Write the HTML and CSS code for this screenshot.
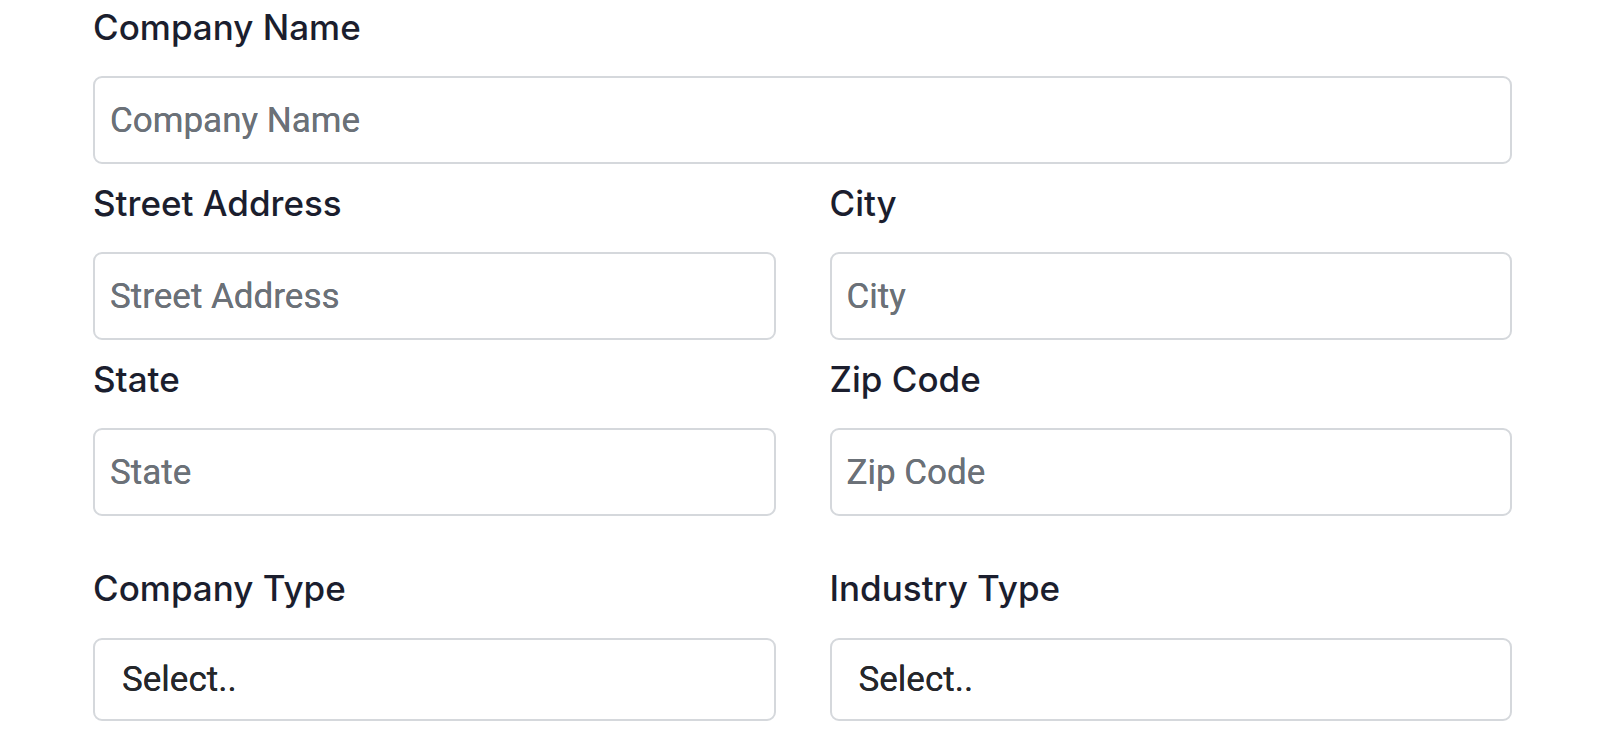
FILE: index.html
```html
<!DOCTYPE html>
<html lang="en">
<head>
<meta charset="utf-8">
<title>Company Form</title>
<link rel="stylesheet" href="styles.css">
</head>
<body>
<form class="form">
  <div class="field">
    <label class="label">Company Name</label>
    <input class="input" type="text" placeholder="Company Name">
  </div>
  <div class="row">
    <div class="field">
      <label class="label">Street Address</label>
      <input class="input" type="text" placeholder="Street Address">
    </div>
    <div class="field">
      <label class="label">City</label>
      <input class="input" type="text" placeholder="City">
    </div>
  </div>
  <div class="row">
    <div class="field">
      <label class="label">State</label>
      <input class="input" type="text" placeholder="State">
    </div>
    <div class="field">
      <label class="label">Zip Code</label>
      <input class="input" type="text" placeholder="Zip Code">
    </div>
  </div>
  <div class="row row-select">
    <div class="field">
      <label class="label label-select">Company Type</label>
      <div class="select">Select..</div>
    </div>
    <div class="field">
      <label class="label label-select">Industry Type</label>
      <div class="select">Select..</div>
    </div>
  </div>
</form>
</body>
</html>
```

FILE: styles.css
```css
* { box-sizing: border-box; }
html, body { margin: 0; padding: 0; background: #ffffff; }
body { font-family: Roboto, "Noto Sans", sans-serif; }

.form {
  width: 1419px;
  margin-left: 93px;
  padding-top: 0;
  display: flex;
  flex-direction: column;
}

.row {
  display: grid;
  grid-template-columns: 1fr 1fr;
  column-gap: 54px;
}

.row-select { margin-top: 33px; }

.field {
  display: flex;
  flex-direction: column;
  margin-bottom: 12px;
}

.label {
  font-family: Inter, Roboto, sans-serif;
  font-weight: 550;
  font-size: 35px;
  line-height: 54px;
  color: #1b1e2e;
  margin-bottom: 22px;
}

.label-select { margin-bottom: 23px; }

.input {
  height: 88px;
  width: 100%;
  border: 2px solid #d5d8dc;
  border-radius: 9px;
  padding: 0 15px;
  font-family: Roboto, sans-serif;
  font-weight: 400;
  font-size: 35px;
  color: #212529;
  background: #fff;
  outline: none;
}

.input::placeholder {
  color: #6b7178;
  opacity: 1;
  text-shadow: 0 0 0.6px #6b7178;
}

.select {
  height: 83px;
  border: 2px solid #d5d8dc;
  border-radius: 9px;
  padding: 0 27px;
  display: flex;
  align-items: center;
  font-family: Roboto, sans-serif;
  font-weight: 400;
  font-size: 35px;
  color: #25272b;
  text-shadow: 0 0 0.5px #25272b;
  background: #fff;
}
```
